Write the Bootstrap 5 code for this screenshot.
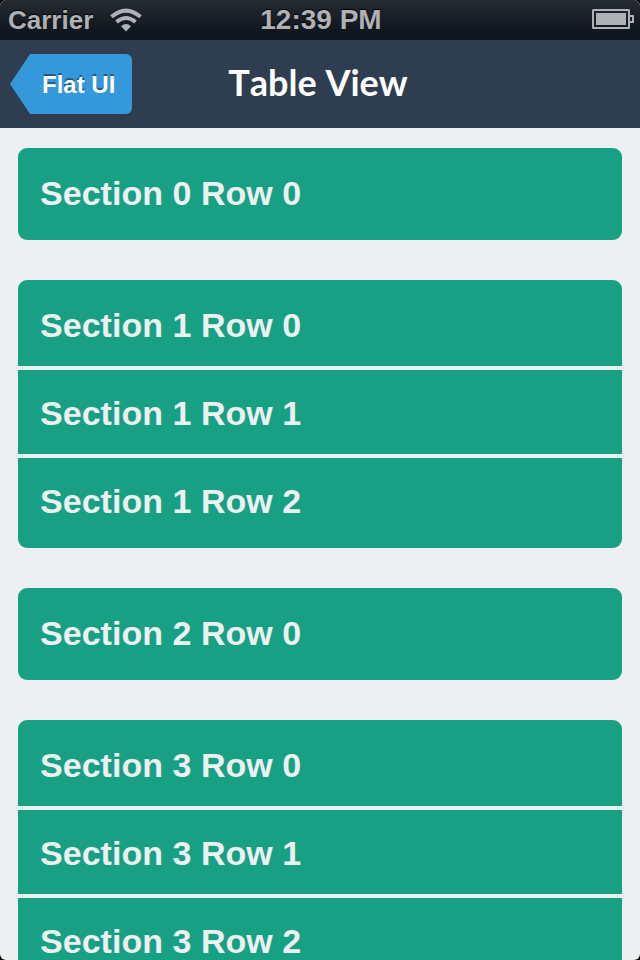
<!DOCTYPE html>
<html lang="en">
<head>
<meta charset="utf-8">
<meta name="viewport" content="width=device-width, initial-scale=1">
<title>Table View</title>
<link href="https://cdn.jsdelivr.net/npm/bootstrap@5.3.0/dist/css/bootstrap.min.css" rel="stylesheet">
<style>
html { background: #000; }
body { background: #000; font-family: "Liberation Sans", Arial, sans-serif; font-weight: 700; }
.screen { width: 640px; height: 960px; background: #ecf0f1; border-radius: 6px; }
.status { height: 40px; background: linear-gradient(#272b33, #10171e 75%, #0f161d); color: #b0b1b4; text-shadow: 0 -1px 1px #000; line-height: 40px; }
.status-side { width: 200px; font-size: 26px; }
.clock { font-size: 28px; padding-left: 2px; }
.battery { margin-right: 6px; }
.wifi { margin-left: 17px; }
.top-bar { height: 88px; background: #2e3e50; }
.bar-side { width: 122px; margin: 0 10px; }
.back { width: 122px; height: 60px; padding-left: 32px; font-size: 24px; line-height: 61px; color: #fff; background: #3498db; border-radius: 0 6px 6px 0; clip-path: polygon(20px 0, 100% 0, 100% 100%, 20px 100%, 0 50%); text-shadow: 0 -2px 0 #1f5b83; }
.title { font: 700 36px/44px Lato, sans-serif; font-kerning: none; color: #fff; padding: 0 4px 4px 0; }
.groups { padding: 20px 18px 0; gap: 40px; }
.group { --bs-list-group-border-radius: 9px; flex-shrink: 0; }
.cell { height: 88px; padding: 0 22px; border: 0; border-bottom: 4px solid #ecf0f1; background: #18a085; background-clip: padding-box; color: #ecf0f1; font-size: 34px; line-height: 86px; letter-spacing: .03px; }
.cell:first-child { height: 90px; line-height: 90px; }
.cell:last-child { height: 90px; border-bottom: 0; }
.cell:only-child { height: 92px; }
</style>
</head>
<body>
<div class="screen overflow-hidden d-flex flex-column">
  <div class="status d-flex justify-content-between flex-shrink-0">
    <div class="status-side d-flex align-items-center ps-2">
      <span>Carrier</span>
      <svg class="wifi" width="32" height="24" viewBox="0 0 32 24" fill="none" stroke="#b0b1b4" stroke-width="4">
        <path d="M1.5 8.8Q16-3.6 30.5 8.8"/>
        <path d="M6.5 14Q16 6 25.5 14"/>
        <path d="M11 18.3Q16 13.5 21 18.3L16 23.5Z" fill="#b0b1b4" stroke="none"/>
      </svg>
    </div>
    <div class="clock">12:39 PM</div>
    <div class="status-side d-flex align-items-start justify-content-end">
      <svg class="battery" width="42" height="29" viewBox="0 -9 42 29" fill="none" stroke="#b0b1b4" stroke-width="2">
        <rect x="1" y="1" width="36" height="18" rx=".5"/>
        <rect x="4" y="4" width="30" height="12" fill="#b0b1b4" stroke="none"/>
        <path d="M38 7h3v6h-3"/>
      </svg>
    </div>
  </div>
  <nav class="top-bar d-flex align-items-center justify-content-between flex-shrink-0">
    <div class="bar-side"><a class="back d-block text-decoration-none" href="#">Flat UI</a></div>
    <h1 class="title m-0">Table View</h1>
    <div class="bar-side"></div>
  </nav>
  <main class="groups d-flex flex-column">
    <ul class="list-group group">
      <li class="list-group-item cell">Section 0 Row 0</li>
    </ul>
    <ul class="list-group group">
      <li class="list-group-item cell">Section 1 Row 0</li>
      <li class="list-group-item cell">Section 1 Row 1</li>
      <li class="list-group-item cell">Section 1 Row 2</li>
    </ul>
    <ul class="list-group group">
      <li class="list-group-item cell">Section 2 Row 0</li>
    </ul>
    <ul class="list-group group">
      <li class="list-group-item cell">Section 3 Row 0</li>
      <li class="list-group-item cell">Section 3 Row 1</li>
      <li class="list-group-item cell">Section 3 Row 2</li>
    </ul>
  </main>
</div>
<script src="https://cdn.jsdelivr.net/npm/bootstrap@5.3.0/dist/js/bootstrap.bundle.min.js"></script>
</body>
</html>
